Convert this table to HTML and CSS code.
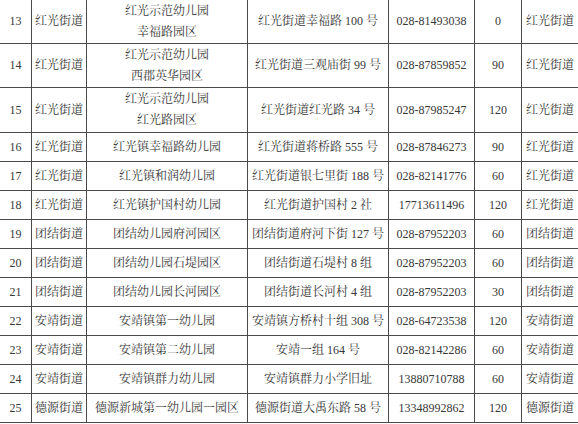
FILE: index.html
```html
<!DOCTYPE html>
<html lang="zh-CN">
<head>
<meta charset="utf-8">
<title>幼儿园名单</title>
<link rel="stylesheet" href="styles.css">
</head>
<body>
<table class="list">
  <colgroup>
    <col class="c-no"><col class="c-street"><col class="c-name"><col class="c-addr"><col class="c-tel"><col class="c-num"><col class="c-area">
  </colgroup>
  <tbody>
    <tr class="two"><td>13</td><td>红光街道</td><td>红光示范幼儿园<br>幸福路园区</td><td>红光街道幸福路 100 号</td><td>028-81493038</td><td>0</td><td>红光街道</td></tr>
    <tr class="two"><td>14</td><td>红光街道</td><td>红光示范幼儿园<br>西郡英华园区</td><td>红光街道三观庙街 99 号</td><td>028-87859852</td><td>90</td><td>红光街道</td></tr>
    <tr class="two last-two"><td>15</td><td>红光街道</td><td>红光示范幼儿园<br>红光路园区</td><td>红光街道红光路 34 号</td><td>028-87985247</td><td>120</td><td>红光街道</td></tr>
    <tr><td>16</td><td>红光街道</td><td>红光镇幸福路幼儿园</td><td>红光街道蒋桥路 555 号</td><td>028-87846273</td><td>90</td><td>红光街道</td></tr>
    <tr><td>17</td><td>红光街道</td><td>红光镇和润幼儿园</td><td>红光街道银七里街 188 号</td><td>028-82141776</td><td>60</td><td>红光街道</td></tr>
    <tr><td>18</td><td>红光街道</td><td>红光镇护国村幼儿园</td><td>红光街道护国村 2 社</td><td>17713611496</td><td>120</td><td>红光街道</td></tr>
    <tr><td>19</td><td>团结街道</td><td>团结幼儿园府河园区</td><td>团结街道府河下街 127 号</td><td>028-87952203</td><td>60</td><td>团结街道</td></tr>
    <tr><td>20</td><td>团结街道</td><td>团结幼儿园石堤园区</td><td>团结街道石堤村 8 组</td><td>028-87952203</td><td>60</td><td>团结街道</td></tr>
    <tr><td>21</td><td>团结街道</td><td>团结幼儿园长河园区</td><td>团结街道长河村 4 组</td><td>028-87952203</td><td>30</td><td>团结街道</td></tr>
    <tr><td>22</td><td>安靖街道</td><td>安靖镇第一幼儿园</td><td>安靖镇方桥村十组 308 号</td><td>028-64723538</td><td>120</td><td>安靖街道</td></tr>
    <tr><td>23</td><td>安靖街道</td><td>安靖镇第二幼儿园</td><td>安靖一组 164 号</td><td>028-82142286</td><td>60</td><td>安靖街道</td></tr>
    <tr><td>24</td><td>安靖街道</td><td>安靖镇群力幼儿园</td><td>安靖镇群力小学旧址</td><td>13880710788</td><td>60</td><td>安靖街道</td></tr>
    <tr><td>25</td><td>德源街道</td><td>德源新城第一幼儿园一园区</td><td>德源街道大禹东路 58 号</td><td>13348992862</td><td>120</td><td>德源街道</td></tr>
  </tbody>
</table>
</body>
</html>
```

FILE: styles.css
```css
html, body {
  margin: 0;
  padding: 0;
  background: #ffffff;
  overflow: hidden;
}

body {
  font-family: "Liberation Serif", "Noto Serif CJK SC", "Noto Sans CJK SC", serif;
  font-size: 12px;
  color: #383838;
}

.list {
  border-collapse: collapse;
  table-layout: fixed;
  width: 579px;
  margin: -1px 0 0 -1px;
}

.c-no { width: 32px; }
.c-street { width: 55px; }
.c-name { width: 161px; }
.c-addr { width: 141px; }
.c-tel { width: 86px; }
.c-num { width: 47px; }
.c-area { width: 57px; }

.list td {
  border: 1px solid #4a4a4a;
  text-align: center;
  vertical-align: middle;
  padding: 0;
  height: 28px;
  line-height: 20px;
  white-space: nowrap;
  overflow: hidden;
}

.list tr.two td {
  height: 43px;
  line-height: 21px;
}

.list tr.last-two td {
  height: 44px;
}
```
